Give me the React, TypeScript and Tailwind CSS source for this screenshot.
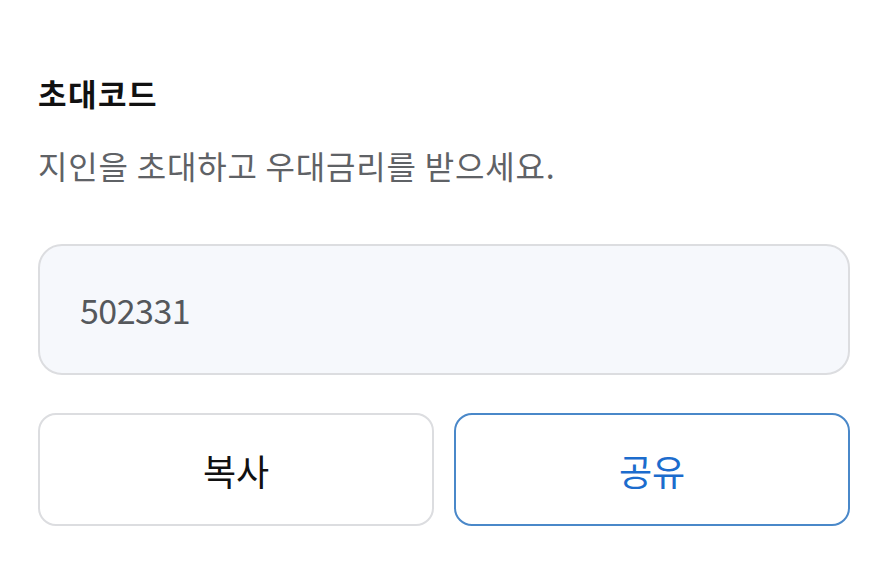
import React from 'react';

const font = { fontFamily: '"Noto Sans CJK KR", "Noto Sans", sans-serif' };

const App = () => {
  const code = '502331';

  return (
    <div className="w-[887px] h-[566px] bg-white" style={font}>
      <div className="pl-[38px] pr-[37px] pt-[77px] flex flex-col">
        <h2 className="text-[31px] leading-[32px] font-bold text-[#111111] tracking-[1.5px]">초대코드</h2>
        <p className="mt-[38px] text-[32px] leading-[36px] text-[#5f6266] tracking-[0.8px]">
          지인을 초대하고 우대금리를 받으세요.
        </p>

        {/* Code box */}
        <div className="mt-[61px] h-[131px] rounded-[24px] border-2 border-[#dcdde0] bg-[#f6f8fc] flex items-center pl-[40px]">
          <span className="text-[34px] text-[#55585c] tracking-[-0.5px]">{code}</span>
        </div>

        {/* Actions */}
        <div className="mt-[38px] grid grid-cols-2 gap-[20px]">
          <button className="h-[113px] rounded-[18px] border-2 border-[#dcdde0] bg-white text-[36px] text-[#111111]">
            복사
          </button>
          <button className="h-[113px] rounded-[18px] border-2 border-[#4a88c9] bg-white text-[36px] text-[#1c6ccd]">
            공유
          </button>
        </div>
      </div>
    </div>
  );
};

export default App;
